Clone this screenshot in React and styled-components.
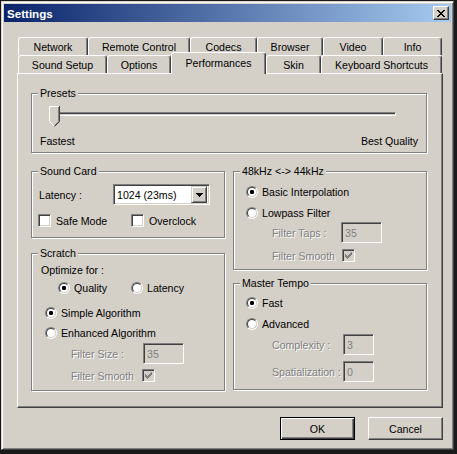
import styled, { createGlobalStyle } from "styled-components";

const Global = createGlobalStyle`
  html, body { margin: 0; padding: 0; background: #1a1a1a; }
  body {
    font-family: "Liberation Sans", Arial, sans-serif;
    font-size: 10.6px;
    color: #000;
  }
`;

const Window = styled.div`
  box-sizing: border-box;
  width: 453px;
  height: 449px;
  margin: 1px 0 0 1px;
  padding: 2px;
  background: #d4d0c8;
  border: 1px solid;
  border-color: #d4d0c8 #404040 #404040 #d4d0c8;
  box-shadow: inset 1px 1px #fff, inset -1px -1px #808080;
  display: flex;
  flex-direction: column;
`;

const TitleBar = styled.div`
  height: 18px;
  display: flex;
  align-items: center;
  justify-content: space-between;
  padding: 0 2px 0 3px;
  background: linear-gradient(to right, #0a246a, #a6caf0);
`;

const Title = styled.span`
  color: #fff;
  font-weight: bold;
  font-size: 11.6px;
`;

const CloseButton = styled.div`
  box-sizing: border-box;
  width: 16px;
  height: 14px;
  background: #d4d0c8;
  border: 1px solid;
  border-color: #fff #404040 #404040 #fff;
  box-shadow: inset -1px -1px #808080;
  display: flex;
  align-items: center;
  justify-content: center;
`;

const Body = styled.div`
  padding: 15px 0 0 13px;
`;

const TabRow = styled.div`
  display: flex;
  align-items: flex-end;
  padding-left: 1px;
  height: ${(p) => p.$h}px;
  margin-top: ${(p) => p.$mt || 0}px;
`;

const Tab = styled.div`
  box-sizing: border-box;
  flex: none;
  width: ${(p) => p.$w}px;
  height: ${(p) => (p.$active ? 22 : 18)}px;
  margin-bottom: ${(p) => (p.$active ? -1 : 0)}px;
  padding-bottom: ${(p) => (p.$active ? 2 : 0)}px;
  position: relative;
  z-index: ${(p) => (p.$active ? 2 : 0)};
  background: #d4d0c8;
  border: 1px solid;
  border-bottom: none;
  border-color: #fff #404040 transparent #fff;
  border-radius: 3px 3px 0 0;
  box-shadow: inset -1px 0 #808080;
  display: flex;
  align-items: center;
  justify-content: center;
  white-space: nowrap;
`;

const Panel = styled.div`
  box-sizing: border-box;
  width: 426px;
  height: 335px;
  border: 1px solid;
  border-color: #fff #404040 #404040 #fff;
  box-shadow: inset -1px -1px #808080;
  padding: 19px 0 0 13px;
`;

const Group = styled.div`
  box-sizing: border-box;
  width: ${(p) => p.$w || 194}px;
  height: ${(p) => p.$h}px;
  border: 1px solid #808080;
  box-shadow: inset 1px 1px #fff, 1px 1px #fff;
  padding: 0 8px;
  display: flex;
  flex-direction: column;
`;

const Caption = styled.div`
  align-self: flex-start;
  margin: -7px 0 0 -2px;
  padding: 0 2px;
  line-height: 13px;
  background: #d4d0c8;
  white-space: nowrap;
`;

const Columns = styled.div`
  display: grid;
  grid-template-columns: 194px 194px;
  column-gap: 8px;
  margin-top: 18px;
  align-items: start;
`;

const Column = styled.div`
  display: flex;
  flex-direction: column;
  gap: ${(p) => p.$gap}px;
`;

const Row = styled.div`
  display: flex;
  align-items: center;
  height: ${(p) => p.$h || 16}px;
  margin-top: ${(p) => p.$mt || 0}px;
  margin-left: ${(p) => p.$indent || 0}px;
  justify-content: ${(p) => p.$spread ? "space-between" : "flex-start"};
  white-space: nowrap;
`;

const Label = styled.span`
  flex: none;
  width: ${(p) => (p.$w ? `${p.$w}px` : "auto")};
  color: ${(p) => (p.$disabled ? "#808080" : "#000")};
  text-shadow: ${(p) => (p.$disabled ? "1px 1px 0 #fff" : "none")};
`;

const Option = styled.span`
  flex: none;
  display: flex;
  align-items: center;
  width: ${(p) => (p.$w ? `${p.$w}px` : "auto")};
`;

const RadioMark = styled.span`
  box-sizing: border-box;
  flex: none;
  width: 12px;
  height: 12px;
  margin-right: 4px;
  border-radius: 50%;
  border: 1px solid;
  border-color: #808080 #fff #fff #808080;
  display: flex;
  align-items: center;
  justify-content: center;
  &::before {
    content: "";
    box-sizing: border-box;
    width: 10px;
    height: 10px;
    border-radius: 50%;
    border: 1px solid;
    border-color: #404040 #d4d0c8 #d4d0c8 #404040;
    background: ${(p) =>
      p.$on ? "radial-gradient(circle, #000 0 2px, #fff 2.3px)" : "#fff"};
  }
`;

const CheckBox = styled.span`
  box-sizing: border-box;
  flex: none;
  width: 13px;
  height: 13px;
  margin-right: 5px;
  border: 1px solid;
  border-color: #808080 #fff #fff #808080;
  box-shadow: inset 1px 1px #404040, inset -1px -1px #d4d0c8;
  background: ${(p) => (p.$disabled ? "#d4d0c8" : "#fff")};
  display: flex;
  align-items: center;
  justify-content: center;
`;

const Sunken = styled.div`
  box-sizing: border-box;
  flex: none;
  width: ${(p) => p.$w}px;
  height: 21px;
  border: 1px solid;
  border-color: #808080 #fff #fff #808080;
  box-shadow: inset 1px 1px #404040, inset -1px -1px #d4d0c8;
  background: ${(p) => (p.$disabled ? "#d4d0c8" : "#fff")};
  color: ${(p) => (p.$disabled ? "#808080" : "#000")};
  display: flex;
  align-items: center;
  padding: 2px 2px 2px 3px;
`;

const ComboText = styled.span`
  flex: 1;
`;

const DropButton = styled.span`
  box-sizing: border-box;
  width: 16px;
  height: 17px;
  background: #d4d0c8;
  border: 1px solid;
  border-color: #d4d0c8 #404040 #404040 #d4d0c8;
  box-shadow: inset 1px 1px #fff, inset -1px -1px #808080;
  display: flex;
  align-items: center;
  justify-content: center;
`;

const Slider = styled.div`
  position: relative;
  height: 21px;
  margin-top: 6px;
  padding-top: 6px;
  box-sizing: border-box;
`;

const Track = styled.div`
  box-sizing: border-box;
  height: 4px;
  margin: 0 22px 0 16px;
  border: 1px solid;
  border-color: #808080 #fff #fff #808080;
  box-shadow: inset 1px 1px #404040;
`;

const Thumb = styled.svg`
  position: absolute;
  left: 9px;
  top: 0;
`;

const ButtonRow = styled.div`
  width: 426px;
  display: flex;
  justify-content: flex-end;
  gap: 13px;
  margin-top: 9px;
`;

const Button = styled.div`
  box-sizing: border-box;
  width: 75px;
  height: 23px;
  display: flex;
  align-items: center;
  justify-content: center;
  background: #d4d0c8;
  border: 1px solid;
  border-color: ${(p) => (p.$default ? "#000" : "#fff #404040 #404040 #fff")};
  box-shadow: ${(p) =>
    p.$default
      ? "inset 1px 1px #fff, inset -1px -1px #404040, inset -2px -2px #808080"
      : "inset -1px -1px #808080"};
`;

const Pixels = ({ w, h, d, color }) => (
  <svg width={w} height={h} viewBox={`0 0 ${w} ${h}`} shapeRendering="crispEdges">
    <path d={d} fill={color} />
  </svg>
);

const CLOSE =
  "M0 0h2v1h-2z M6 0h2v1h-2z M1 1h2v1h-2z M5 1h2v1h-2z M2 2h4v1h-4z M3 3h2v1h-2z M2 4h4v1h-4z M1 5h2v1h-2z M5 5h2v1h-2z M0 6h2v1h-2z M6 6h2v1h-2z";
const CHECK =
  "M6 0h1v1h-1z M5 1h2v1h-2z M0 2h1v1h-1z M4 2h3v1h-3z M0 3h2v1h-2z M3 3h3v1h-3z M0 4h5v1h-5z M1 5h3v1h-3z M2 6h1v1h-1z";
const ARROW = "M0 0h7v1h-7z M1 1h5v1h-5z M2 2h3v1h-3z M3 3h1v1h-1z";

function Radio({ on, children, w }) {
  return (
    <Option $w={w}>
      <RadioMark $on={on} />
      <Label>{children}</Label>
    </Option>
  );
}

function Check({ checked, disabled, children, w }) {
  return (
    <Option $w={w}>
      <CheckBox $disabled={disabled}>
        {checked && <Pixels w={7} h={7} d={CHECK} color={disabled ? "#808080" : "#000"} />}
      </CheckBox>
      {children && <Label $disabled={disabled}>{children}</Label>}
    </Option>
  );
}

const topTabs = [
  ["Network", 70],
  ["Remote Control", 102],
  ["Codecs", 67],
  ["Browser", 66],
  ["Video", 60],
  ["Info", 59],
];

const bottomTabs = [
  ["Sound Setup", 89],
  ["Options", 64],
  ["Performances", 95, true],
  ["Skin", 55],
  ["Keyboard Shortcuts", 121],
];

export default function App() {
  return (
    <>
      <Global />
      <Window>
        <TitleBar>
          <Title>Settings</Title>
          <CloseButton>
            <Pixels w={8} h={7} d={CLOSE} color="#000" />
          </CloseButton>
        </TitleBar>
        <Body>
          <TabRow $h={18}>
            {topTabs.map(([name, w]) => (
              <Tab key={name} $w={w}>{name}</Tab>
            ))}
          </TabRow>
          <TabRow $h={21} $mt={-3}>
            {bottomTabs.map(([name, w, active]) => (
              <Tab key={name} $w={w} $active={active}>{name}</Tab>
            ))}
          </TabRow>
          <Panel>
            <Group $w={396} $h={60}>
              <Caption>Presets</Caption>
              <Slider>
                <Track />
                <Thumb width="11" height="21" viewBox="0 0 11 21">
                  <polygon points="0,0 11,0 11,16 5.5,21 0,16" fill="#d4d0c8" />
                  <polyline points="0.5,15.5 0.5,0.5 10,0.5" fill="none" stroke="#fff" />
                  <polyline points="0.5,15.5 5.5,20.5" fill="none" stroke="#fff" />
                  <polyline points="10.5,0 10.5,15.5 5.5,20.5" fill="none" stroke="#404040" />
                  <polyline points="9.5,1 9.5,15.5 5.5,19.5" fill="none" stroke="#808080" />
                </Thumb>
              </Slider>
              <Row $h={13} $mt={7} $spread>
                <Label>Fastest</Label>
                <Label>Best Quality</Label>
              </Row>
            </Group>

            <Columns>
              <Column $gap={15}>
                <Group $h={67}>
                  <Caption>Sound Card</Caption>
                  <Row $h={21} $mt={6} $indent={-1}>
                    <Label $w={74}>Latency :</Label>
                    <Sunken $w={97}>
                      <ComboText>1024 (23ms)</ComboText>
                      <DropButton>
                        <Pixels w={7} h={4} d={ARROW} color="#000" />
                      </DropButton>
                    </Sunken>
                  </Row>
                  <Row $h={13} $mt={9} $indent={-2}>
                    <Check w={93}>Safe Mode</Check>
                    <Check>Overclock</Check>
                  </Row>
                </Group>

                <Group $h={138}>
                  <Caption>Scratch</Caption>
                  <Row $h={13} $mt={3} $indent={1}>
                    <Label>Optimize for :</Label>
                  </Row>
                  <Row $mt={4} $indent={18}>
                    <Radio on w={73}>Quality</Radio>
                    <Radio>Latency</Radio>
                  </Row>
                  <Row $mt={9} $indent={5}>
                    <Radio on>Simple Algorithm</Radio>
                  </Row>
                  <Row $mt={4} $indent={5}>
                    <Radio>Enhanced Algorithm</Radio>
                  </Row>
                  <Row $h={21} $mt={2} $indent={31}>
                    <Label $w={72} $disabled>Filter Size :</Label>
                    <Sunken $w={41} $disabled>35</Sunken>
                  </Row>
                  <Row $h={13} $mt={5} $indent={31}>
                    <Label $w={71} $disabled>Filter Smooth</Label>
                    <Check checked disabled />
                  </Row>
                </Group>
              </Column>

              <Column $gap={13}>
                <Group $h={99}>
                  <Caption>48kHz &lt;-&gt; 44kHz</Caption>
                  <Row $mt={6} $indent={4}>
                    <Radio on>Basic Interpolation</Radio>
                  </Row>
                  <Row $mt={5} $indent={4}>
                    <Radio>Lowpass Filter</Radio>
                  </Row>
                  <Row $h={21} $mt={1} $indent={30}>
                    <Label $w={69} $disabled>Filter Taps :</Label>
                    <Sunken $w={41} $disabled>35</Sunken>
                  </Row>
                  <Row $h={13} $mt={6} $indent={30}>
                    <Label $w={70} $disabled>Filter Smooth</Label>
                    <Check checked disabled />
                  </Row>
                </Group>

                <Group $h={107}>
                  <Caption>Master Tempo</Caption>
                  <Row $mt={5} $indent={4}>
                    <Radio on>Fast</Radio>
                  </Row>
                  <Row $mt={5} $indent={4}>
                    <Radio>Advanced</Radio>
                  </Row>
                  <Row $h={21} $mt={2} $indent={30}>
                    <Label $w={71} $disabled>Complexity :</Label>
                    <Sunken $w={31} $disabled>3</Sunken>
                  </Row>
                  <Row $h={21} $mt={6} $indent={30}>
                    <Label $w={71} $disabled>Spatialization :</Label>
                    <Sunken $w={31} $disabled>0</Sunken>
                  </Row>
                </Group>
              </Column>
            </Columns>
          </Panel>
          <ButtonRow>
            <Button $default>OK</Button>
            <Button>Cancel</Button>
          </ButtonRow>
        </Body>
      </Window>
    </>
  );
}
